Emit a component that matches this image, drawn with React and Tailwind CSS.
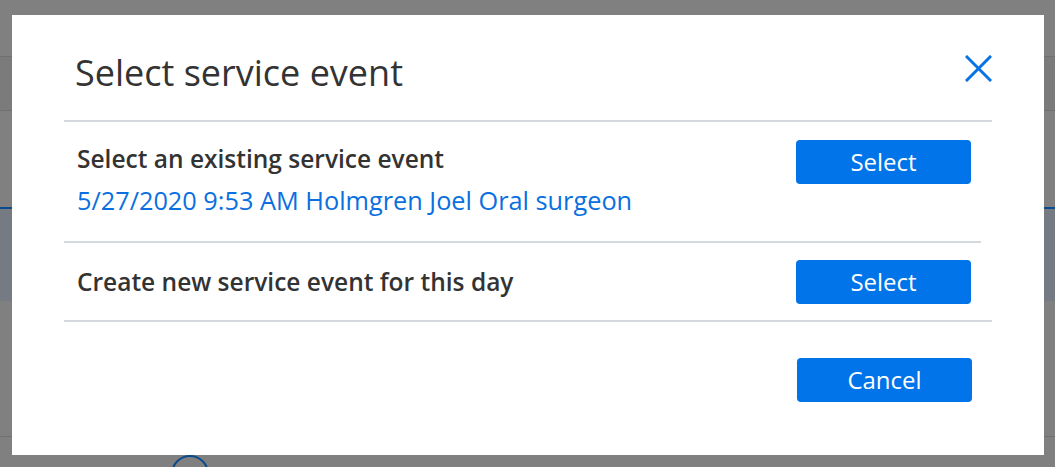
import React from "react";

function CloseIcon() {
  return (
    <svg width="27" height="27" viewBox="0 0 27 27" fill="none">
      <path d="M2 2 L25 25 M25 2 L2 25" stroke="#0a73e4" strokeWidth="3" strokeLinecap="square" />
    </svg>
  );
}

function BlueButton({ children }) {
  return (
    <button
      type="button"
      className="w-[175px] h-[44px] rounded-[4px] bg-[#0074e8] text-white text-[24px] leading-none shrink-0"
    >
      {children}
    </button>
  );
}

export default function App() {
  return (
    <div
      className="relative w-[1055px] h-[467px] overflow-hidden bg-[#808080]"
      style={{ fontFamily: '"Open Sans", "Noto Sans", sans-serif' }}
    >
      {/* dimmed page behind the dialog */}
      <div className="flex flex-col">
        <div className="h-[56px]" />
        <div className="h-[55px] bg-[#7b7b7b] border-y border-[#707070]" />
        <div className="h-[96px]" />
        <div className="h-[94px] bg-[#767a82] border-t-2 border-[#0b4a8c]" />
        <div className="h-[135px]" />
        <div className="h-px bg-[#707070]" />
        <div className="pl-[171px] pt-[18px]">
          <div className="w-[38px] h-[38px] rounded-full border-2 border-[#0b4a8c]" />
        </div>
      </div>

      {/* dialog */}
      <div className="absolute left-[12px] top-[15px] w-[1032px] h-[440px] bg-white px-[52px] text-[#333333]">
        <div className="h-[107px] flex items-center justify-between border-b-2 border-[#d5d9de]">
          <h1 className="pl-[11px] text-[36px] leading-none pt-[10px]">Select service event</h1>
          <div className="pt-[2px]">
            <CloseIcon />
          </div>
        </div>

        <div className="mr-[11px] h-[121px] flex justify-between border-b-2 border-[#d5d9de] pt-[18px] pr-[10px]">
          <div className="pl-[13px] pt-[4px]">
            <div className="text-[24.5px] font-semibold leading-[30px]">Select an existing service event</div>
            <div className="text-[25.3px] leading-[30px] mt-[11px] text-[#0a6fdf]">
              5/27/2020 9:53 AM Holmgren Joel Oral surgeon
            </div>
          </div>
          <BlueButton>Select</BlueButton>
        </div>

        <div className="h-[79px] flex items-center justify-between border-b-2 border-[#d5d9de] pr-[21px]">
          <div className="pl-[13px] text-[24.5px] font-semibold leading-[30px]">
            Create new service event for this day
          </div>
          <BlueButton>Select</BlueButton>
        </div>

        <div className="flex justify-end pt-[36px] pr-[20px]">
          <BlueButton>Cancel</BlueButton>
        </div>
      </div>
    </div>
  );
}
